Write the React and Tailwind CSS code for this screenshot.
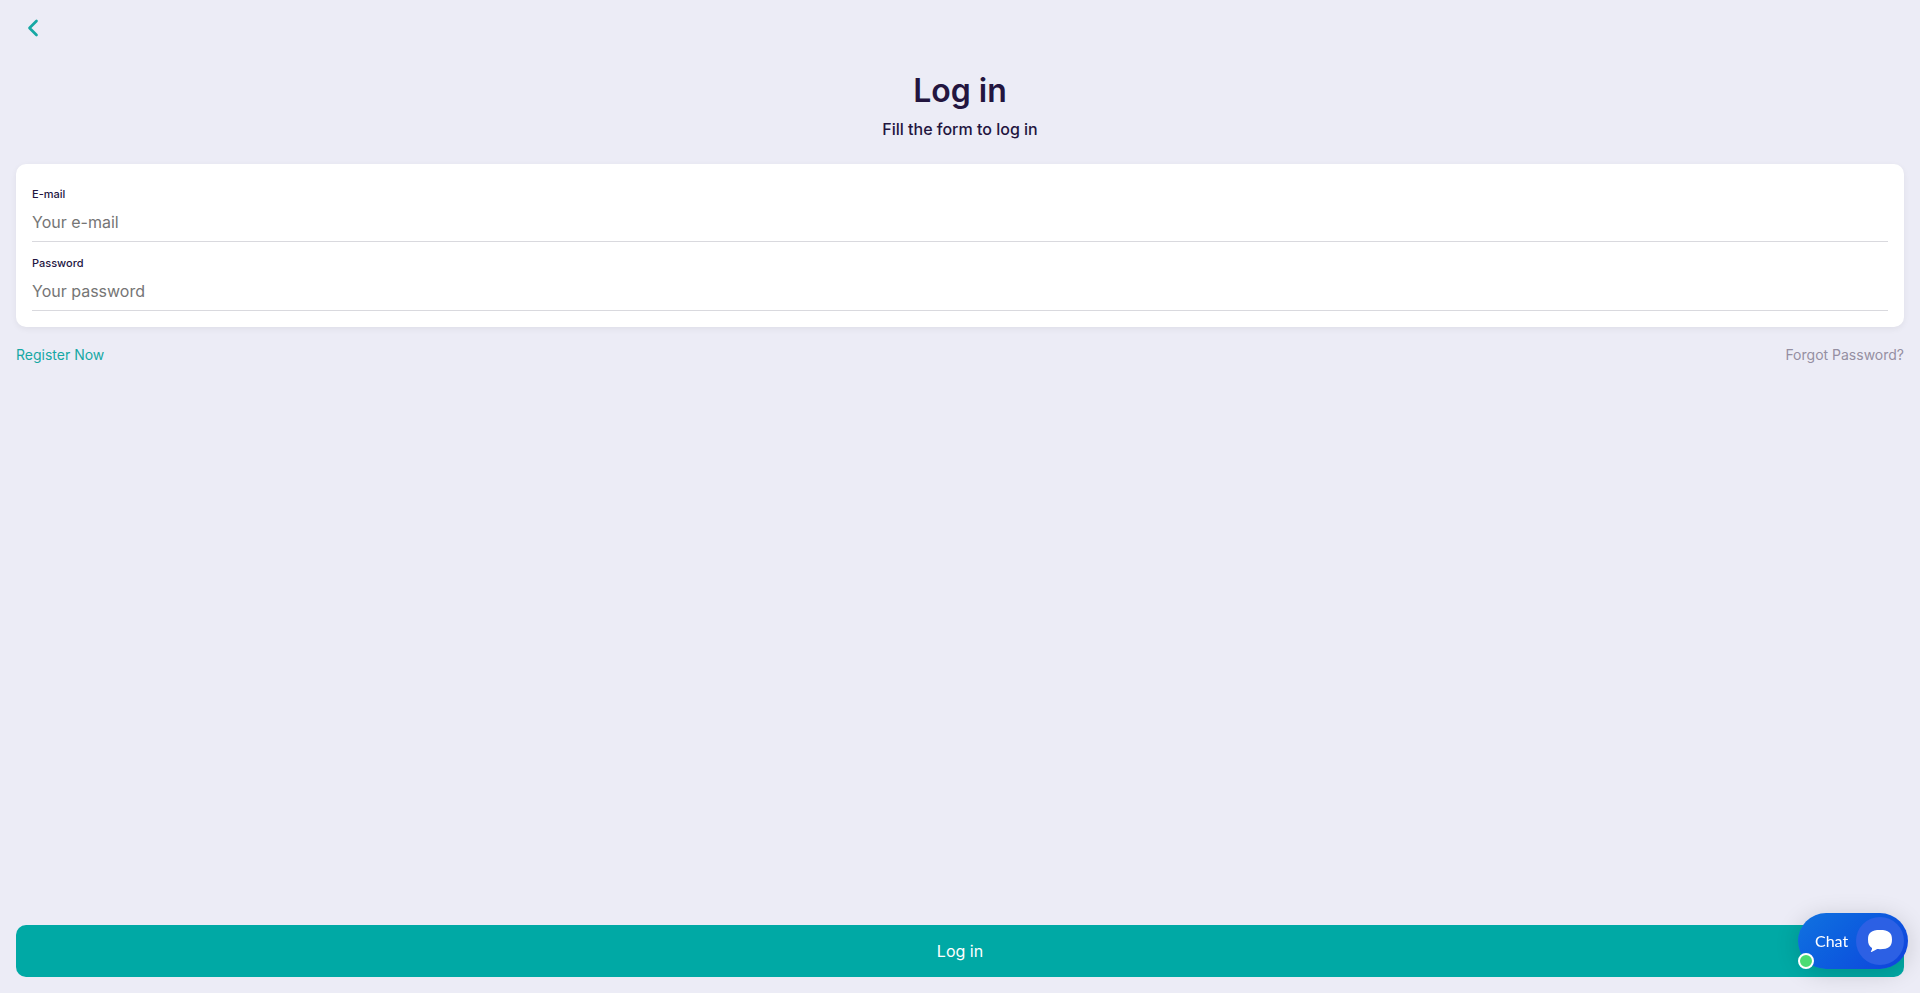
import React from 'react';
import { ChevronLeft } from 'lucide-react';

const Field = ({ id, label, type, placeholder }) => (
  <div className="flex flex-col">
    <label htmlFor={id} className="text-[11px] leading-4 font-medium text-[#23153f]">
      {label}
    </label>
    <input
      id={id}
      type={type}
      placeholder={placeholder}
      className="h-10 w-full border-b border-[#d9d9de] bg-transparent text-base text-[#23153f] outline-none placeholder:text-[#757575]"
    />
  </div>
);

const ChatButton = () => (
  <button
    type="button"
    className="fixed right-3 bottom-6 flex h-14 w-[110px] items-center justify-between rounded-full bg-linear-135 from-[#1272e0] to-[#1240dc] pr-1 pl-[17px] font-['Lato',sans-serif] text-base text-white shadow-[0_4px_24px_rgba(0,0,0,0.16)]"
  >
    <span>Chat</span>
    <span className="flex size-12 items-center justify-center rounded-full bg-[#2c60e4]">
      <svg viewBox="0 0 24 22" className="h-[22px] w-6" fill="currentColor" aria-hidden="true">
        <path d="M12 0C20.5 0 24 2.5 24 9.500C24 16.500 20.500 19.200 12 19.200C11 19.200 10 19.200 9.200 19.100C7.500 20.300 5.500 21.300 3.500 21.900C2.900 22 2.700 21.500 3 21.100C3.700 20.200 4.100 19.200 4 17.900C1.200 16.500 0 13.900 0 9.500C0 2.500 3.500 0 12 0Z" />
      </svg>
    </span>
    <span className="absolute bottom-0 left-0 size-4 rounded-full border-2 border-white bg-[#4bdc72]" />
  </button>
);

const App = () => {
  return (
    <div className="flex min-h-screen flex-col bg-[#ececf6] p-4 font-['Inter',sans-serif] text-[#23153f]">
      <header className="flex h-6 items-center">
        <button type="button" aria-label="Back" className="flex size-[34px] items-center justify-center text-[#16a8a4]">
          <ChevronLeft size={28} strokeWidth={2.3} />
        </button>
      </header>

      <div className="mt-[29px] text-center">
        <h1 className="text-[32px] leading-11 font-semibold">Log in</h1>
        <p className="mt-1 text-base leading-6 font-medium">Fill the form to log in</p>
      </div>

      <form id="login" className="mt-[23px] flex flex-col gap-[13px] rounded-[10px] bg-white px-4 pt-[22px] pb-4 shadow-[0_2px_6px_rgba(0,0,0,0.06)]">
        <Field id="email" label="E-mail" type="email" placeholder="Your e-mail" />
        <Field id="password" label="Password" type="password" placeholder="Your password" />
      </form>

      <div className="mt-4 flex items-center justify-between text-sm leading-6">
        <a href="#register" className="text-[#16a8a4]">Register Now</a>
        <a href="#forgot" className="text-[#958fa2]">Forgot Password?</a>
      </div>

      <button
        type="submit"
        form="login"
        className="mt-auto h-[52px] w-full rounded-[10px] bg-[#00a9a5] text-base text-white"
      >
        Log in
      </button>

      <ChatButton />
    </div>
  );
};

export default App;
